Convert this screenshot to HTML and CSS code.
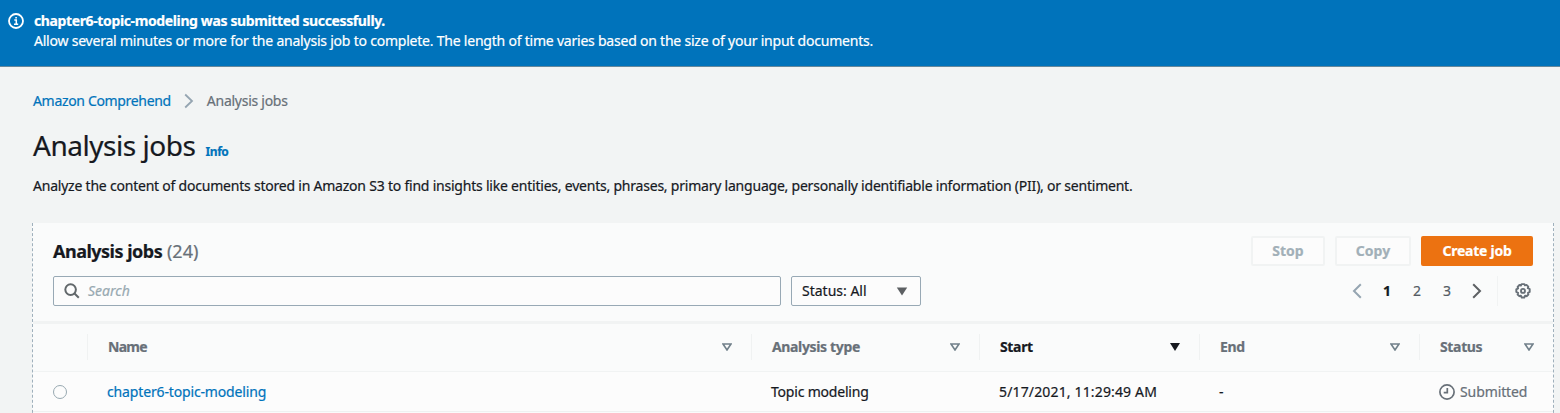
FILE: index.html
```html
<!DOCTYPE html>
<html lang="en">
<head>
<meta charset="utf-8">
<title>Analysis jobs</title>
<link rel="stylesheet" href="styles.css">
</head>
<body>
<div class="flash">
  <svg class="flash-icon" width="16" height="16" viewBox="0 0 16 16" fill="none" stroke="#fff"><circle cx="8" cy="8" r="7" stroke-width="1.8"/><path d="M6.3 7h2v4M6 11.2h4.2M7.3 4.7h1.6" stroke-width="1.5"/></svg>
  <div class="flash-copy">
    <strong><span class="t-flash-title">chapter6-topic-modeling was submitted successfully.</span></strong>
    <div><span class="t-flash-text">Allow several minutes or more for the analysis job to complete. The length of time varies based on the size of your input documents.</span></div>
  </div>
</div>
<main>
  <nav class="crumbs">
    <a class="t-crumb">Amazon Comprehend</a>
    <svg width="10" height="16" viewBox="0 0 10 16" fill="none" stroke="#95a5b1" stroke-width="1.8"><path d="M1.2 1.5 8 8l-6.8 6.5"/></svg>
    <span class="t-crumb2">Analysis jobs</span>
  </nav>
  <header class="title">
    <h1>Analysis jobs</h1><a class="info">Info</a>
  </header>
  <p class="desc"><span class="t-desc">Analyze the content of documents stored in Amazon S3 to find insights like entities, events, phrases, primary language, personally identifiable information (PII), or sentiment.</span></p>
  <section class="panel">
    <div class="panel-head">
      <h2><span class="t-h2">Analysis jobs</span> <span class="count">(24)</span></h2>
      <div class="actions">
        <button class="btn stop" disabled>Stop</button>
        <button class="btn copy" disabled>Copy</button>
        <button class="btn primary">Create job</button>
      </div>
    </div>
    <div class="tools">
      <div class="search">
        <svg width="16" height="16" viewBox="0 0 16 16" fill="none" stroke="#62686b" stroke-width="2"><circle cx="6.6" cy="6.6" r="5.3"/><path d="m10.3 10.3 4.5 4.5"/></svg>
        <span class="t-search">Search</span>
      </div>
      <div class="select"><span>Status: All</span>
        <svg width="12" height="9" viewBox="0 0 12 9"><path d="M.8.6h10.4L6 8.5z" fill="#5d6063"/></svg>
      </div>
      <div class="pager">
        <svg width="10" height="16" viewBox="0 0 10 16" fill="none" stroke="#95a5b1" stroke-width="2"><path d="M8.8 1.3 2 8l6.8 6.7"/></svg>
        <b>1</b><span>2</span><span>3</span>
        <svg width="10" height="16" viewBox="0 0 10 16" fill="none" stroke="#5d6063" stroke-width="2"><path d="M1.2 1.3 8 8l-6.8 6.7"/></svg>
      </div>
      <div class="settings">
        <svg width="16" height="16" viewBox="0 0 16 16" fill="none" stroke="#687078" stroke-width="1.9" stroke-linejoin="round"><path d="M6.6 1.1h2.8l.5 1.3 1.6-.5 1.8 1.8-.5 1.4 1.9.9v3l-1.7.9.4 1.6-1.8 1.7-1.5-.5-.8 1.8H6.7l-.8-1.8-1.6.5-1.7-1.7.5-1.7-1.8-.8V6.3l1.8-.9-.5-1.6 1.8-1.8 1.5.5z"/><circle cx="8" cy="7.9" r="2"/></svg>
      </div>
    </div>
    <div class="grid thead">
      <div></div>
      <div class="cell"><span class="t-name">Name</span><svg width="10" height="8" viewBox="0 0 10 8"><path d="M1 1h8L5 7z" fill="none" stroke="#71808a" stroke-width="1.6"/></svg></div>
      <div class="cell"><span class="t-type">Analysis type</span><svg width="10" height="8" viewBox="0 0 10 8"><path d="M1 1h8L5 7z" fill="none" stroke="#71808a" stroke-width="1.6"/></svg></div>
      <div class="cell sorted"><span class="t-start">Start</span><svg width="10" height="8" viewBox="0 0 10 8"><path d="M0 0h10L5 8z" fill="#16191f"/></svg></div>
      <div class="cell"><span class="t-end">End</span><svg width="10" height="8" viewBox="0 0 10 8"><path d="M1 1h8L5 7z" fill="none" stroke="#71808a" stroke-width="1.6"/></svg></div>
      <div class="cell"><span class="t-status">Status</span><svg width="10" height="8" viewBox="0 0 10 8"><path d="M1 1h8L5 7z" fill="none" stroke="#71808a" stroke-width="1.6"/></svg></div>
    </div>
    <div class="grid row">
      <div class="pick"><span class="radio"></span></div>
      <div><a class="t-job">chapter6-topic-modeling</a></div>
      <div><span class="t-topic">Topic modeling</span></div>
      <div><span class="t-date">5/17/2021, 11:29:49 AM</span></div>
      <div>-</div>
      <div class="state"><svg width="16" height="16" viewBox="0 0 16 16" fill="none" stroke="#687078" stroke-width="1.7"><circle cx="8" cy="8" r="7.1"/><path d="M8.3 4v4.6H4.7"/></svg><span class="t-sub">Submitted</span></div>
    </div>
  </section>
</main>
</body>
</html>
```
FILE: styles.css
```css
* { box-sizing: border-box; }
body {
  margin: 0;
  height: 413px;
  overflow: hidden;
  background: #f2f4f4;
  color: #16191f;
  font: 14px/20px "Noto Sans", sans-serif;
  -webkit-text-stroke: .2px;
}
svg { display: block; flex: none; }
a { color: #0073bb; }
.flash {
  display: flex;
  height: 67px;
  padding: 11px 8px;
  gap: 10px;
  color: #fff;
  background: #0073bb;
  border-bottom: 1px solid #65889c;
}
.flash-icon { margin-top: 2px; }
.flash-copy { white-space: nowrap; }
.flash-copy strong { display: block; }
main { padding: 24px 6px 0 32px; }
.crumbs {
  display: flex;
  align-items: center;
  gap: 13px;
  height: 20px;
  padding-left: 1px;
  color: #687078;
}
.title {
  display: flex;
  align-items: baseline;
  gap: 10px;
  height: 36px;
  margin-top: 16px;
  padding-left: 1px;
}
h1 { margin: 0; font-size: 28px; line-height: 36px; font-weight: 400; letter-spacing: -.46px; }
.info { font-size: 12px; font-weight: 700; letter-spacing: -.45px; }
.desc { margin: 13px 0 0 1px; white-space: nowrap; }
.t-flash-title { letter-spacing: -.375px; }
.t-flash-text, .t-desc { letter-spacing: -.218px; }
.t-crumb { letter-spacing: -.33px; }
.t-crumb2 { letter-spacing: -.27px; }
.t-h2 { letter-spacing: -.5px; }
.t-name { letter-spacing: -.7px; }
.t-type, .t-start, .t-status, .t-end { letter-spacing: -.35px; }
.t-job { letter-spacing: -.15px; }
.t-topic { letter-spacing: -.2px; }
.t-date { letter-spacing: .15px; }
.t-sub { letter-spacing: -.1px; }
.panel {
  height: 200px;
  margin-top: 27px;
  background: #fafbfb;
  border: 1px dashed #9fb0bc;
  border-width: 0 1px;
}
.panel-head {
  display: flex;
  justify-content: space-between;
  align-items: center;
  padding: 13px 20px 0;
}
h2 { margin: 0; font-size: 18px; line-height: 30px; white-space: nowrap; }
.count { font-weight: 400; color: #687078; }
.actions { display: flex; gap: 10px; }
.btn {
  height: 30px;
  padding: 0;
  border: 2px solid #f1f3f3;
  border-radius: 2px;
  background: #fcfcfc;
  color: #a2b0b8;
  font: 700 14px/20px "Noto Sans", sans-serif;
}
.stop { width: 74px; }
.copy { width: 76px; }
.primary { width: 112px; background: #ec7211; border-color: #ec7211; color: #fff; letter-spacing: -.25px; }
.tools {
  display: flex;
  align-items: center;
  height: 58px;
  padding: 10px 22px 15px 20px;
  border-bottom: 3px solid #f1f3f3;
}
.search, .select {
  display: flex;
  align-items: center;
  height: 30px;
  background: #fcfcfc;
  border: 1px solid #98a9b5;
  border-radius: 2px;
}
.search { width: 728px; padding-left: 10px; gap: 8px; color: #98a9b1; font-style: italic; }
.select { width: 130px; margin-left: 10px; padding: 0 12px 0 10px; justify-content: space-between; }
.pager {
  display: flex;
  align-items: center;
  margin-left: auto;
  color: #545b64;
}
.pager b, .pager span { width: 30px; text-align: center; }
.pager b { margin-left: 10px; color: #16191f; }
.pager svg:last-child { margin-left: 10px; }
.settings {
  display: flex;
  align-items: center;
  height: 30px;
  margin-left: 15px;
  padding-left: 17px;
  border-left: 1px solid #f1f3f3;
}
.grid {
  display: grid;
  grid-template-columns: 54px 664px 228px 220px 220px 134px;
  align-items: center;
  white-space: nowrap;
}
.thead { height: 48px; padding-bottom: 1px; border-bottom: 1px solid #f1f3f3; color: #687078; font-weight: 700; }
.cell {
  display: flex;
  align-items: center;
  justify-content: space-between;
  height: 26px;
  padding: 0 19px 0 20px;
  border-left: 1px solid #f0f2f2;
}
.cell:last-child { padding-right: 19px; }
.sorted { color: #16191f; }
.row { height: 40px; background: #fcfcfc; border-bottom: 1px solid #eff1f1; }
.row > div { padding-left: 20px; }
.radio { display: block; width: 14px; height: 14px; border: 1px solid #98a9b1; border-radius: 50%; }
.state { display: flex; align-items: center; gap: 5px; color: #687078; }
```
